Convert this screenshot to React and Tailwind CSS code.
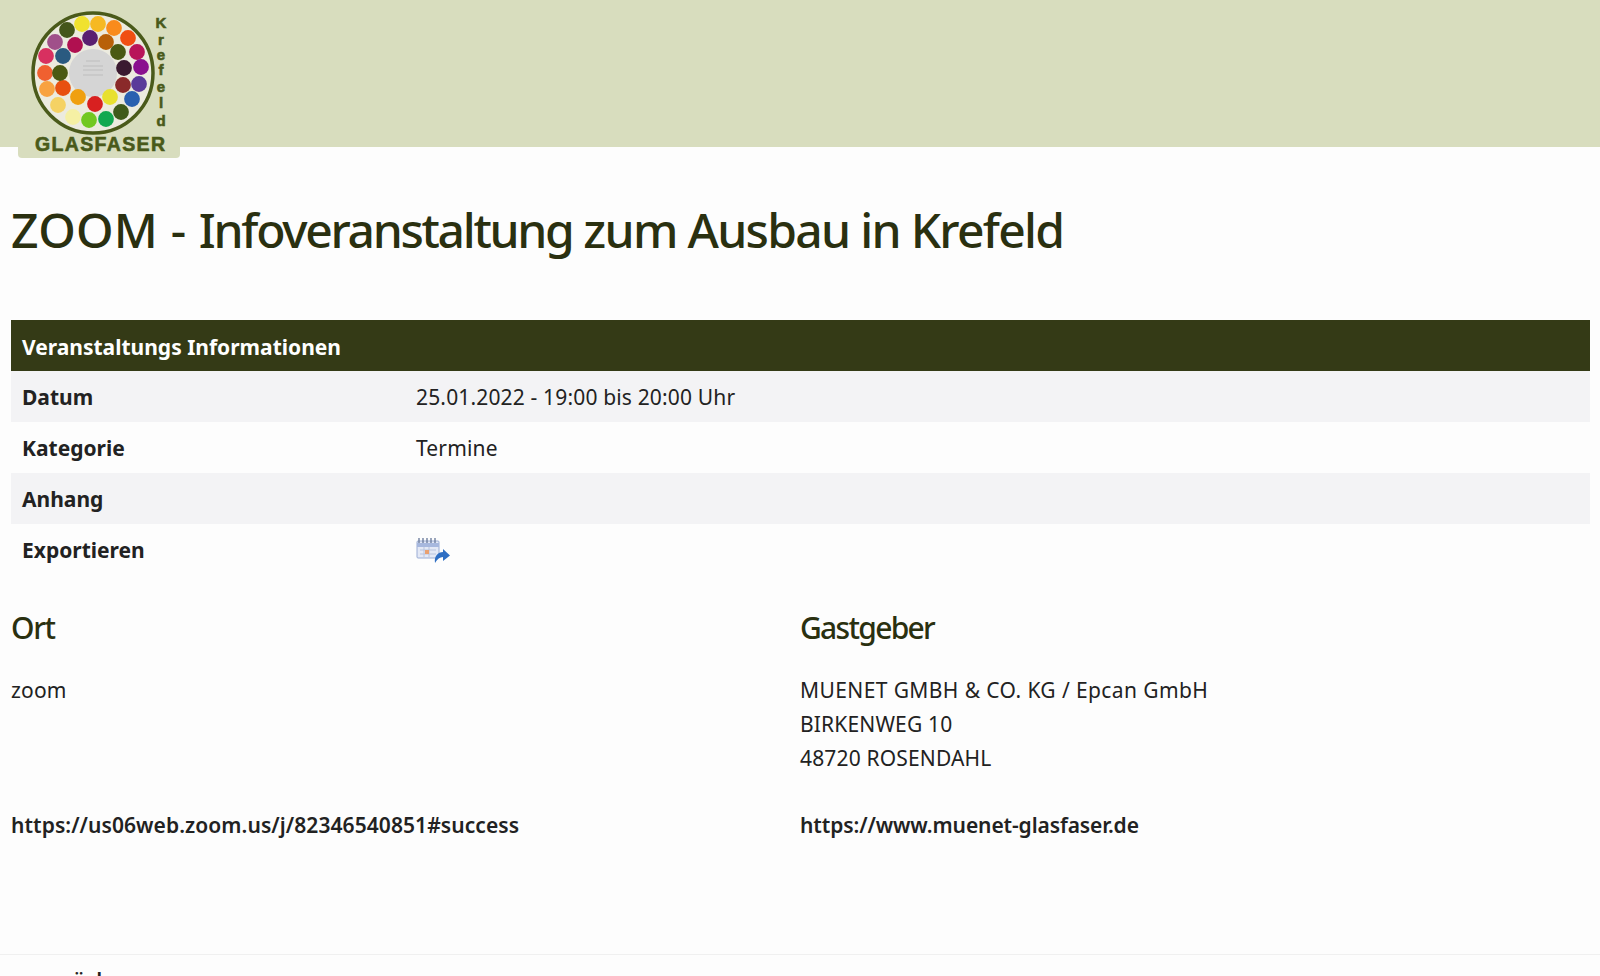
// logo dots: x, y, colour (in logo coordinates)
const dots = [
  [67, 30, '#44561a'], [82, 24, '#f0e22e'], [98, 24, '#f6b922'], [114, 28, '#f98b1c'], [128, 38, '#f04e12'],
  [137, 52, '#b8145a'], [141, 67, '#8a108f'], [139, 84, '#5a3a9a'], [132, 99, '#2a60b0'], [121, 112, '#3f5a1a'],
  [106, 119, '#12a850'], [89, 120, '#72c822'], [73, 117, '#f5f0a4'], [58, 105, '#f5d264'], [47, 89, '#f8a240'],
  [45, 73, '#f06030'], [46, 56, '#d83060'], [55, 42, '#a0508a'],
  [75, 45, '#b01050'], [90, 38, '#5a2070'], [106, 42, '#b86008'], [118, 52, '#4a5a12'], [124, 68, '#3a1a30'],
  [123, 85, '#8a2a2a'], [110, 97, '#e8e030'], [95, 104, '#d82020'], [78, 97, '#f0a010'], [63, 88, '#e85010'],
  [60, 73, '#4a5a12'], [63, 56, '#2a5a80'],
]

function Logo() {
  return (
    <svg viewBox="0 0 200 170" className="w-[200px] h-[170px] shrink-0">
      <rect x="18" y="130" width="162" height="28" rx="4" fill="#d8ddbe" />
      <circle cx="93" cy="73" r="60" fill="#ecebdf" stroke="#4a5a1a" strokeWidth="3.5" />
      <circle cx="93" cy="73" r="24" fill="#d5d5d5" />
      <g stroke="#bdbdbd" strokeWidth="1">
        <path d="M86 61h14M83 66h20M83 70h20M83 75h20" />
      </g>
      {dots.map(([x, y, c], i) => (
        <circle key={i} cx={x} cy={y} r="7.9" fill={c} />
      ))}
      <g fontFamily="Liberation Sans, sans-serif" fontWeight="700" fill="#4a5a1a" stroke="#4a5a1a" strokeWidth="0.6" textAnchor="middle" fontSize="15">
        <text x="161" y="28">K</text>
        <text x="161" y="45">r</text>
        <text x="161" y="60">e</text>
        <text x="161" y="75">f</text>
        <text x="161" y="92">e</text>
        <text x="161" y="108">l</text>
        <text x="161" y="126">d</text>
        <text x="100" y="150.5" fontSize="19.5" textLength="130" lengthAdjust="spacing">GLASFASER</text>
      </g>
    </svg>
  )
}

function ExportIcon() {
  return (
    <svg viewBox="0 0 34 28" className="w-[34px] h-[28px]">
      <rect x="1" y="4" width="22" height="17" rx="1" fill="#e4e9f6" stroke="#9aacd4" />
      <path d="M1 6h22v4H1z" fill="#a7b8de" />
      <path d="M3 1v5M7 1v5M11 1v5M15 1v5M19 1v5" stroke="#6f7f9f" strokeWidth="1.4" />
      <path d="M4 13h16M4 17h16M8 10v10M13 10v10" stroke="#b9c4de" />
      <rect x="9" y="13" width="4" height="4" fill="#e9a070" />
      <path d="M19 26c-1-7 3-11 8-11v-3l7 6.500-7 5.500v-4c-3 0-6 2-8 6z" fill="#2f6fc4" />
    </svg>
  )
}

const rows = [
  { label: 'Datum', value: '25.01.2022 - 19:00 bis 20:00 Uhr' },
  { label: 'Kategorie', value: 'Termine' },
  { label: 'Anhang', value: '' },
  { label: 'Exportieren', icon: true },
]

export default function App() {
  return (
    <div className="h-[976px] overflow-hidden bg-[#fdfdfd] text-[#222] font-['Noto_Sans','Open_Sans',sans-serif] text-[21px]">
      {/* Header */}
      <header className="h-[147px] bg-[#d8ddbe]">
        <Logo />
      </header>

      <main className="pl-[11px] pr-[10px]">
        <h1 className="mt-[51px] text-[48px] leading-[64px] font-medium text-[#2a3010] tracking-[-1.7px]">
          <span className="tracking-[0.15px]">ZOOM - </span>
          <span className="tracking-[-2.3px]">Infoveranstaltung</span> zum Ausbau in Krefeld
        </h1>

        {/* Info table */}
        <div className="mt-[58px]">
          <div className="h-[51px] flex items-center px-[11px] pt-[4px] bg-[#343a16] text-white font-bold">
            Veranstaltungs Informationen
          </div>
          {rows.map((row, i) => (
            <div key={row.label} className={`h-[51px] flex items-center px-[11px] pt-[3px] ${i % 2 === 0 ? 'bg-[#f3f3f5]' : ''}`}>
              <div className="w-[394px] font-bold">{row.label}</div>
              {row.icon ? <ExportIcon /> : <div className="tracking-[0.16px]">{row.value}</div>}
            </div>
          ))}
        </div>

        {/* Ort / Gastgeber */}
        <div className="grid grid-cols-[789px_1fr] mt-[26px]">
          <div>
            <h2 className="text-[30px] leading-[54px] font-medium text-[#2a3010] tracking-[-1.3px]">Ort</h2>
            <div className="mt-[18px] leading-[34px] tracking-[0.16px]">zoom</div>
            <div className="mt-[101px] leading-[34px] font-semibold tracking-[0.07px]">https://us06web.zoom.us/j/82346540851#success</div>
          </div>
          <div>
            <h2 className="text-[30px] leading-[54px] font-medium text-[#2a3010] tracking-[-1.7px]">Gastgeber</h2>
            <div className="mt-[18px] leading-[34px] tracking-[0.16px]">
              <span className="tracking-[0.4px]">MUENET GMBH &amp; CO. KG / Epcan GmbH</span><br />BIRKENWEG 10<br />48720 ROSENDAHL
            </div>
            <div className="mt-[33px] leading-[34px] font-semibold tracking-[-0.1px]">https://www.muenet-glasfaser.de</div>
          </div>
        </div>
      </main>

      {/* Footer */}
      <div className="mt-[112px] border-t border-[#f0f0f0] pt-[10px] px-[22px] font-semibold">« zurück</div>
    </div>
  )
}
